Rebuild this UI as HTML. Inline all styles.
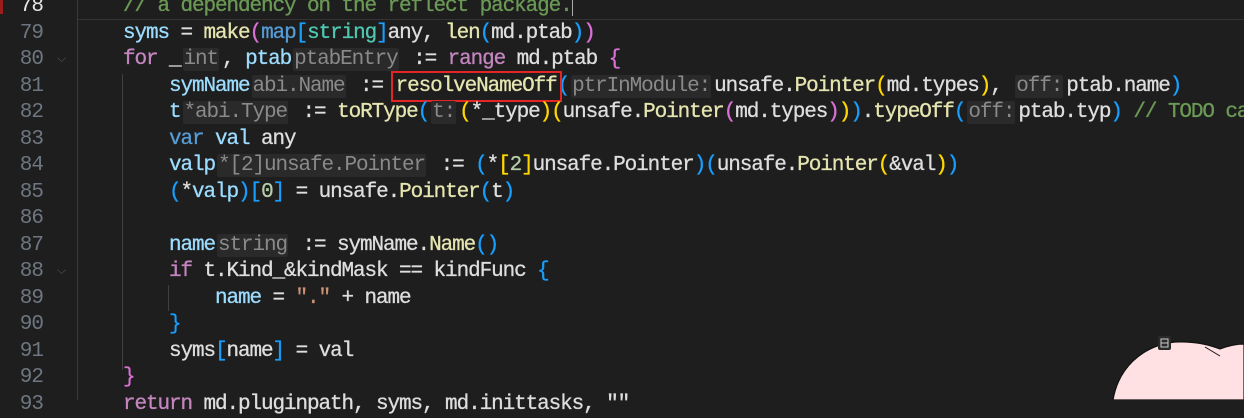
<!DOCTYPE html>
<html><head><meta charset="utf-8"><style>
body{margin:0;width:1244px;height:400px;background:#1e1e1e;overflow:hidden;position:relative;font-family:"Liberation Mono",monospace;}
.ln{position:absolute;left:0;width:43px;text-align:right;color:#6e7681;font-size:21px;letter-spacing:-1px;height:26px;line-height:26px;}
.l{position:absolute;left:123px;white-space:pre;font-size:21px;letter-spacing:-1.1px;line-height:26px;height:26px;color:#dedede;-webkit-text-stroke:0.3px;}
.h{background:#2a2a2a;color:#8a8a8a;padding:0 1px;margin:0 3px 0 2px;border-radius:2px;-webkit-text-stroke:0;}
.v{color:#9cdcfe}.f{color:#e5e5b0}.k{color:#c586c0}.b{color:#569cd6}.t{color:#4ec9b0}.c{color:#6a9955}.s{color:#ce9178}.n{color:#b5cea8}
.y{color:#ffd700}.p{color:#da70d6}.q{color:#179fff}
.g{position:absolute;width:1px;background:#404040;}
</style></head><body>
<div style="position:absolute;left:77px;top:0;width:1px;height:400px;background:#3a3a3a"></div>
<div style="position:absolute;left:78px;top:19px;width:1166px;height:1px;background:#333"></div>
<div style="position:absolute;left:0;top:0;width:3px;height:14px;background:#9b1c1c"></div>
<div class="g" style="left:122px;top:74px;height:296px"></div>
<div class="g" style="left:168px;top:285px;height:26px"></div>
<div class="ln" style="top:-6px;color:#e6e6e6">78</div>
<div class="ln" style="top:20.5px">79</div>
<div class="ln" style="top:47px">80</div>
<div class="ln" style="top:73.5px">81</div>
<div class="ln" style="top:100px">82</div>
<div class="ln" style="top:126.5px">83</div>
<div class="ln" style="top:153px">84</div>
<div class="ln" style="top:179.5px">85</div>
<div class="ln" style="top:206px">86</div>
<div class="ln" style="top:232.5px">87</div>
<div class="ln" style="top:259px">88</div>
<div class="ln" style="top:285.5px">89</div>
<div class="ln" style="top:312px">90</div>
<div class="ln" style="top:338.5px">91</div>
<div class="ln" style="top:365px">92</div>
<div class="ln" style="top:391.5px">93</div>
<div style="position:absolute;left:57px;top:52px;color:#555;font-size:12px">&#x2335;</div>
<div style="position:absolute;left:57px;top:264px;color:#555;font-size:12px">&#x2335;</div>
<div class="l" style="top:-6px"><span class="c">// a dependency on the reflect package.</span><span style="display:inline-block;width:1px;height:22px;background:#aaa;vertical-align:middle"></span></div>
<div class="l" style="top:20.5px"><span class="v">syms</span> = <span class="f">make</span><span class="p">(</span><span class="b">map</span><span class="q">[</span><span class="t">string</span><span class="q">]</span>any, <span class="f">len</span><span class="q">(</span>md.ptab<span class="q">)</span><span class="p">)</span></div>
<div class="l" style="top:47px"><span class="k">for</span> _<span class="h">int</span>, <span class="v">ptab</span><span class="h">ptabEntry</span> := <span class="k">range</span> md.ptab <span class="p">{</span></div>
<div class="l" style="top:73.5px;left:169px"><span class="v">symName</span><span class="h">abi.Name</span> := <span class="f" style="outline:2px solid #e52525;outline-offset:2px;padding:0 1px">resolveNameOff</span><span class="q">(</span><span class="h">ptrInModule:</span>unsafe.<span class="f">Pointer</span><span class="y">(</span>md.types<span class="y">)</span>, <span class="h">off:</span>ptab.name<span class="q">)</span></div>
<div class="l" style="top:100px;left:169px"><span class="v">t</span><span class="h">*abi.Type</span> := <span class="f">toRType</span><span class="q">(</span><span class="h">t:</span><span class="y">(</span>*_type<span class="y">)(</span>unsafe.<span class="f">Pointer</span><span class="p">(</span>md.types<span class="p">)</span><span class="y">)</span><span class="q">)</span>.<span class="f">typeOff</span><span class="q">(</span><span class="h">off:</span>ptab.typ<span class="q">)</span> <span class="c">// TODO cast</span></div>
<div class="l" style="top:126.5px;left:169px"><span class="b">var</span> <span class="v">val</span> any</div>
<div class="l" style="top:153px;left:169px"><span class="v">valp</span><span class="h">*[2]unsafe.Pointer</span> := <span class="q">(</span>*<span class="y">[</span><span class="n">2</span><span class="y">]</span>unsafe.Pointer<span class="q">)(</span>unsafe.<span class="f">Pointer</span><span class="y">(</span>&amp;val<span class="y">)</span><span class="q">)</span></div>
<div class="l" style="top:179.5px;left:169px"><span class="q">(</span>*<span class="v">valp</span><span class="q">)[</span><span class="n">0</span><span class="q">]</span> = unsafe.<span class="f">Pointer</span><span class="q">(</span>t<span class="q">)</span></div>
<div class="l" style="top:232.5px;left:169px"><span class="v">name</span><span class="h">string</span> := symName.<span class="f">Name</span><span class="q">()</span></div>
<div class="l" style="top:259px;left:169px"><span class="k">if</span> t.Kind_&amp;kindMask == kindFunc <span class="q">{</span></div>
<div class="l" style="top:285.5px;left:215px"><span class="v">name</span> = <span class="s">"."</span> + name</div>
<div class="l" style="top:312px;left:169px"><span class="q">}</span></div>
<div class="l" style="top:338.5px;left:169px">syms<span class="q">[</span>name<span class="q">]</span> = val</div>
<div class="l" style="top:365px"><span class="p">}</span></div>
<div class="l" style="top:391.5px"><span class="k">return</span> md.pluginpath, syms, md.inittasks, ""</div>
<svg style="position:absolute;left:0;top:0" width="1244" height="400">
<path d="M1113,400 C1118,370 1140,346 1175,342 C1195,341 1210,345 1220,349 C1230,345 1238,344 1244,344 L1244,400 Z" fill="#ffe1e4" stroke="#111" stroke-width="1.2"/>
<path d="M1205,347 L1220,356" stroke="#111" stroke-width="1"/>
<rect x="1158" y="336" width="13" height="14" rx="2" fill="#2a2a2a"/>
<rect x="1161" y="339" width="7" height="8" fill="none" stroke="#ccc" stroke-width="1"/>
<line x1="1161" y1="343" x2="1168" y2="343" stroke="#ccc"/>
</svg>
</body></html>
